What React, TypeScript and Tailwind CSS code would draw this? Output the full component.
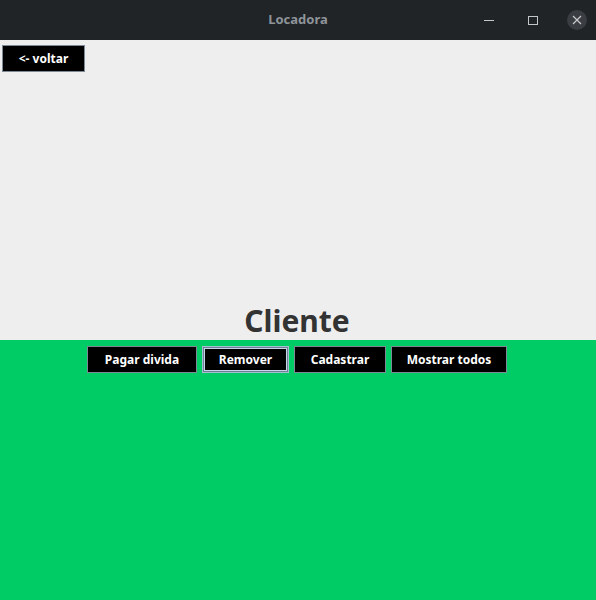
export default function App() {
  const buttons = [
    { label: "Pagar divida", w: "w-[110px]" },
    { label: "Remover", w: "w-[87px]", focused: true },
    { label: "Cadastrar", w: "w-[92px]" },
    { label: "Mostrar todos", w: "w-[116px]" },
  ];

  return (
    <div className="flex h-[600px] w-[596px] flex-col overflow-hidden bg-[#eeeeee] font-['Noto_Sans',sans-serif]">
      {/* Title bar */}
      <div className="relative flex h-[40px] shrink-0 items-center justify-center bg-[#212427]">
        <span className="text-[13px] font-bold text-[#8e949a]">Locadora</span>
        <div className="absolute right-[9px] top-0 flex h-[40px] items-center">
          <div className="mr-[34px] h-[1px] w-[10px] bg-[#c4c6c8]" />
          <div className="mr-[29px] h-[9px] w-[10px] border border-[#c4c6c8]" />
          <div className="flex h-[20px] w-[20px] items-center justify-center rounded-full bg-[#3a3d41]">
            <svg width="10" height="10" viewBox="0 0 10 10" stroke="#c8cacc" strokeWidth="1.2">
              <path d="M1 1 L9 9 M9 1 L1 9" />
            </svg>
          </div>
        </div>
      </div>

      {/* Upper panel */}
      <div className="flex h-[300px] shrink-0 flex-col">
        <div className="pl-[2px] pt-[5px]">
          <button className="flex h-[27px] w-[83px] items-center justify-center border border-[#7d8a96] bg-black text-[12px] font-bold text-white">
            &lt;- voltar
          </button>
        </div>
        <div className="flex-1" />
        <h1 className="pr-[2px] text-center text-[30px] font-bold leading-[38px] text-[#333333]">Cliente</h1>
      </div>

      {/* Green panel */}
      <div className="flex flex-1 justify-center gap-[5px] bg-[#00cc66] pr-[2px] pt-[6px]">
        {buttons.map((b) => (
          <button
            key={b.label}
            className={`flex h-[27px] ${b.w} items-center justify-center bg-black text-[12px] font-bold text-white ${
              b.focused
                ? "border border-[#a9bdd2] shadow-[inset_0_0_0_1px_#6d7f92,inset_0_0_0_2px_#c5d7ea]"
                : "border border-[#7d8a96]"
            }`}
          >
            {b.label}
          </button>
        ))}
      </div>
    </div>
  );
}
